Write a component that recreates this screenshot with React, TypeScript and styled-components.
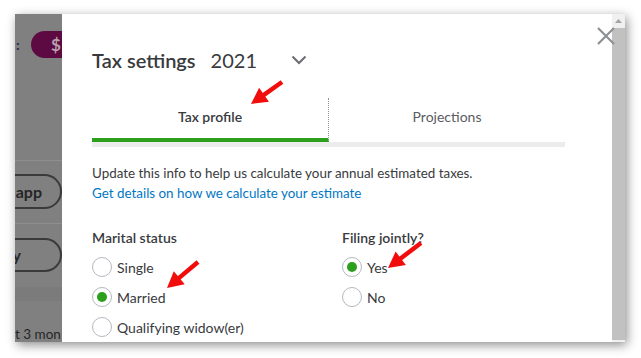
import React from 'react';
import styled, { createGlobalStyle } from 'styled-components';

const GlobalStyle = createGlobalStyle`
  html, body {
    margin: 0;
    padding: 0;
    background: #fff;
  }
  body {
    font-family: Lato, 'Noto Sans', sans-serif;
    color: #393a3d;
  }
`;

type Pt = [number, number];

// red callout arrows drawn on top of the screenshot
const arrows: { tail: Pt; tip: Pt }[] = [
  { tail: [282, 82], tip: [251, 104] },
  { tail: [198, 262], tip: [167, 288] },
  { tail: [421, 243], tip: [388, 268] },
];

function arrowShape(tail: Pt, tip: Pt) {
  const dx = tip[0] - tail[0];
  const dy = tip[1] - tail[1];
  const len = Math.hypot(dx, dy);
  const ux = dx / len;
  const uy = dy / len;
  const head = 16;
  const half = 8.5;
  const bx = tip[0] - ux * head;
  const by = tip[1] - uy * head;
  const nx = -uy;
  const ny = ux;
  const points = `${tip[0]},${tip[1]} ${bx + nx * half},${by + ny * half} ${bx - nx * half},${by - ny * half}`;
  return { line: { x1: tail[0], y1: tail[1], x2: bx + ux, y2: by + uy }, points };
}

function Radio({ label, checked }: { label: string; checked?: boolean }) {
  return (
    <RadioRow>
      <RadioCircle>{checked && <RadioDot />}</RadioCircle>
      <RadioLabel>{label}</RadioLabel>
    </RadioRow>
  );
}

function App() {
  return (
    <Screen>
      <GlobalStyle />
      <Window>
        <Backdrop>
          <TopBar>
            <Colon>:</Colon>
            <Pill>$</Pill>
          </TopBar>
          <Rule $top={102} />
          <GhostButton $top={13} $pad={18}>app</GhostButton>
          <Rule $top={14} />
          <GhostButton $top={14} $pad={39}>y</GhostButton>
          <Band />
          <BehindText>t 3 mon</BehindText>
        </Backdrop>

        <Modal>
          <TitleRow>
            <Title>Tax settings</Title>
            <Year>2021</Year>
            <Chevron width="16" height="10" viewBox="0 0 16 10">
              <path d="M1.5 1.5 L8 8 L14.5 1.5" fill="none" stroke="#6b6c72" strokeWidth="2" />
            </Chevron>
          </TitleRow>

          <TabList>
            <Tab $active>Tax profile</Tab>
            <Tab>Projections</Tab>
          </TabList>

          <Description>
            Update this info to help us calculate your annual estimated taxes.
            <br />
            <Link>Get details on how we calculate your estimate</Link>
          </Description>

          <Fields>
            <Column $width={250}>
              <Legend>Marital status</Legend>
              <RadioList>
                <Radio label="Single" />
                <Radio label="Married" checked />
                <Radio label="Qualifying widow(er)" />
              </RadioList>
            </Column>
            <Column>
              <Legend>Filing jointly?</Legend>
              <RadioList>
                <Radio label="Yes" checked />
                <Radio label="No" />
              </RadioList>
            </Column>
          </Fields>
        </Modal>

        <Scrollbar>
          <ScrollArrow>
            <svg width="7" height="4" viewBox="0 0 7 4">
              <path d="M0 4 L3.5 0 L7 4 Z" fill="#a3a3a3" />
            </svg>
          </ScrollArrow>
          <Thumb />
        </Scrollbar>

        <Close width="20" height="18" viewBox="0 0 20 18">
          <path d="M2 1 L18 17 M18 1 L2 17" stroke="#8d9096" strokeWidth="2.2" fill="none" />
        </Close>
      </Window>

      <Annotations width="641" height="358" viewBox="0 0 641 358">
        {arrows.map((a, i) => {
          const s = arrowShape(a.tail, a.tip);
          return (
            <g key={i}>
              <line {...s.line} stroke="#f20d0d" strokeWidth="4.5" strokeLinecap="butt" />
              <polygon points={s.points} fill="#f20d0d" />
            </g>
          );
        })}
      </Annotations>
    </Screen>
  );
}

export default App;

const Screen = styled.div`
  position: relative;
  width: 641px;
  height: 358px;
  padding: 14px 0 0 15px;
  box-sizing: border-box;
  overflow: hidden;
  background: #fff;
`;

const Window = styled.div`
  position: relative;
  display: flex;
  width: 610px;
  height: 328px;
  background: #fff;
  overflow: hidden;
  box-shadow: 2px 3px 10px rgba(0, 0, 0, 0.45);
`;

const Backdrop = styled.div`
  flex: none;
  width: 47px;
  display: flex;
  flex-direction: column;
  background: #808080;
  font-family: Lato, sans-serif;
`;

const TopBar = styled.div`
  display: flex;
  align-items: center;
  height: 27px;
  margin-top: 17px;
  padding-left: 1px;
`;

const Colon = styled.span`
  width: 15px;
  color: #26264a;
  font-size: 14px;
  font-weight: 700;
`;

const Pill = styled.div`
  flex: 1;
  height: 27px;
  box-sizing: border-box;
  padding-left: 20px;
  border-radius: 14px 0 0 14px;
  background: #5e0a42;
  color: #b9a2ae;
  font-size: 17px;
  font-weight: 700;
  line-height: 27px;
`;

const Rule = styled.div<{ $top: number }>`
  height: 1px;
  margin-top: ${(p) => p.$top}px;
  background: #8e8e8e;
`;

const GhostButton = styled.div<{ $top: number; $pad: number }>`
  height: 35px;
  box-sizing: border-box;
  margin-top: ${(p) => p.$top}px;
  padding-right: ${(p) => p.$pad}px;
  display: flex;
  align-items: center;
  justify-content: flex-end;
  border: 2px solid #3a3a3a;
  border-left: none;
  border-radius: 0 18px 18px 0;
  color: #262626;
  font-size: 16px;
  font-weight: 700;
`;

const Band = styled.div`
  height: 14px;
  margin-top: 15px;
  background: #7b7b7b;
`;

const BehindText = styled.div`
  margin-top: 25px;
  color: #262626;
  font-size: 13.5px;
  line-height: 16px;
  white-space: nowrap;
`;

const Modal = styled.div`
  flex: none;
  width: 550px;
  box-sizing: border-box;
  padding: 34px 47px 0 30px;
  background: #fff;
`;

const TitleRow = styled.div`
  display: flex;
  align-items: center;
  height: 24px;
`;

const Title = styled.h2`
  margin: 0;
  font-size: 20px;
  font-weight: 600;
  color: #393a3d;
`;

const Year = styled.span`
  margin-left: 15px;
  font-size: 20px;
  color: #393a3d;
`;

const Chevron = styled.svg`
  margin-left: 34px;
`;

const TabList = styled.div`
  display: flex;
  margin-top: 26px;
  border-bottom: 5px solid #ececec;
`;

const Tab = styled.div<{ $active?: boolean }>`
  flex: 1;
  height: 44px;
  box-sizing: border-box;
  padding-bottom: 3px;
  display: flex;
  align-items: center;
  justify-content: center;
  font-size: 14px;
  font-weight: ${(p) => (p.$active ? 600 : 400)};
  color: ${(p) => (p.$active ? '#393a3d' : '#5a5c61')};
  border-bottom: 4px solid ${(p) => (p.$active ? '#2ca01c' : 'transparent')};
  &:first-child {
    border-right: 1px dotted #8d9096;
  }
`;

const Description = styled.p`
  margin: 16px 0 0;
  font-size: 13.4px;
  line-height: 20px;
  color: #393a3d;
`;

const Link = styled.a`
  color: #0077c5;
  cursor: pointer;
`;

const Fields = styled.div`
  display: flex;
  margin-top: 25px;
`;

const Column = styled.div<{ $width?: number }>`
  width: ${(p) => (p.$width ? `${p.$width}px` : 'auto')};
  display: flex;
  flex-direction: column;
`;

const Legend = styled.div`
  font-size: 14px;
  font-weight: 600;
  line-height: 20px;
  color: #393a3d;
`;

const RadioList = styled.div`
  margin-top: 4px;
  display: flex;
  flex-direction: column;
`;

const RadioRow = styled.label`
  display: flex;
  align-items: center;
  gap: 5px;
  height: 30px;
`;

const RadioCircle = styled.span`
  width: 20px;
  height: 20px;
  box-sizing: border-box;
  border: 1px solid #b4b8be;
  border-radius: 50%;
  display: flex;
  align-items: center;
  justify-content: center;
`;

const RadioDot = styled.span`
  width: 10px;
  height: 10px;
  border-radius: 50%;
  background: #2ca01c;
`;

const RadioLabel = styled.span`
  font-size: 14px;
  color: #393a3d;
`;

const Scrollbar = styled.div`
  flex: none;
  width: 13px;
  display: flex;
  flex-direction: column;
  background: #f0f0f0;
`;

const ScrollArrow = styled.div`
  height: 14px;
  display: flex;
  align-items: center;
  justify-content: center;
`;

const Thumb = styled.div`
  flex: 1;
  margin: 0 0 2px 0;
  background: #c1c1c1;
`;

const Close = styled.svg`
  position: absolute;
  left: 581px;
  top: 13px;
`;

const Annotations = styled.svg`
  position: absolute;
  top: 0;
  left: 0;
  pointer-events: none;
`;
